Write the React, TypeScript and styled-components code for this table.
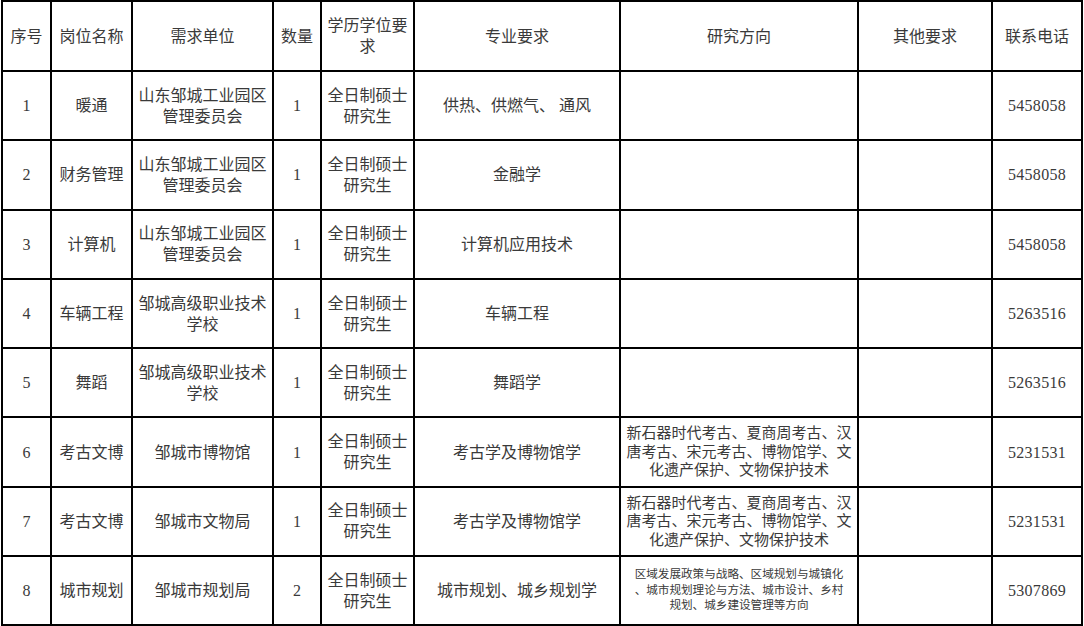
import React from 'react';
import styled, { createGlobalStyle } from 'styled-components';

interface Post {
  no: number;
  title: string;
  unit: string;
  count: number;
  degree: string;
  major: string;
  research: string[];
  researchSmall?: boolean;
  other: string;
  phone: string;
}

const GlobalStyle = createGlobalStyle`
  html, body {
    margin: 0;
    padding: 0;
    background: #ffffff;
  }
  body {
    font-family: 'Liberation Serif', 'Noto Sans CJK SC', serif;
  }
`;

const columns = [49, 81, 141, 48, 93, 206, 238, 134, 90];
const headers = ['序号', '岗位名称', '需求单位', '数量', '学历学位要求', '专业要求', '研究方向', '其他要求', '联系电话'];

const degree = '全日制硕士研究生';
const archaeology = ['新石器时代考古、夏商周考古、汉', '唐考古、宋元考古、博物馆学、文', '化遗产保护、文物保护技术'];

const posts: Post[] = [
  { no: 1, title: '暖通', unit: '山东邹城工业园区管理委员会', count: 1, degree, major: '供热、供燃气、 通风', research: [], other: '', phone: '5458058' },
  { no: 2, title: '财务管理', unit: '山东邹城工业园区管理委员会', count: 1, degree, major: '金融学', research: [], other: '', phone: '5458058' },
  { no: 3, title: '计算机', unit: '山东邹城工业园区管理委员会', count: 1, degree, major: '计算机应用技术', research: [], other: '', phone: '5458058' },
  { no: 4, title: '车辆工程', unit: '邹城高级职业技术学校', count: 1, degree, major: '车辆工程', research: [], other: '', phone: '5263516' },
  { no: 5, title: '舞蹈', unit: '邹城高级职业技术学校', count: 1, degree, major: '舞蹈学', research: [], other: '', phone: '5263516' },
  { no: 6, title: '考古文博', unit: '邹城市博物馆', count: 1, degree, major: '考古学及博物馆学', research: archaeology, other: '', phone: '5231531' },
  { no: 7, title: '考古文博', unit: '邹城市文物局', count: 1, degree, major: '考古学及博物馆学', research: archaeology, other: '', phone: '5231531' },
  {
    no: 8,
    title: '城市规划',
    unit: '邹城市规划局',
    count: 2,
    degree,
    major: '城市规划、城乡规划学',
    research: ['区域发展政策与战略、区域规划与城镇化', '、城市规划理论与方法、城市设计、乡村', '规划、城乡建设管理等方向'],
    researchSmall: true,
    other: '',
    phone: '5307869',
  },
];

const Page = styled.div`
  padding: 0 0 0 1px;
`;

const Table = styled.table`
  width: 1082px;
  table-layout: fixed;
  border-collapse: collapse;
  color: #3a3a3a;
  font-size: 16px;
`;

const HeadRow = styled.tr`
  height: 70px;
`;

const Row = styled.tr`
  height: 69.3px;
`;

const Cell = styled.td`
  border: 2px solid #000;
  padding: 0 2px;
  text-align: center;
  vertical-align: middle;
  line-height: 21px;
  font-weight: 400;
  word-break: break-all;
`;

const Research = styled.div<{ $small?: boolean }>`
  font-size: ${({ $small }) => ($small ? '11.6px' : '15px')};
  line-height: ${({ $small }) => ($small ? '15.5px' : '18.5px')};
  white-space: nowrap;
`;

const Line = styled.span`
  display: block;
`;

const Phone = styled.span`
  letter-spacing: 0.3px;
`;

export default function App() {
  return (
    <>
      <GlobalStyle />
      <Page>
        <Table>
          <colgroup>
            {columns.map((w, i) => (
              <col key={i} style={{ width: w }} />
            ))}
          </colgroup>
          <thead>
            <HeadRow>
              {headers.map((h) => (
                <Cell as="th" key={h}>
                  {h}
                </Cell>
              ))}
            </HeadRow>
          </thead>
          <tbody>
            {posts.map((p) => (
              <Row key={p.no}>
                <Cell>{p.no}</Cell>
                <Cell>{p.title}</Cell>
                <Cell>{p.unit}</Cell>
                <Cell>{p.count}</Cell>
                <Cell>{p.degree}</Cell>
                <Cell>{p.major}</Cell>
                <Cell>
                  <Research $small={p.researchSmall}>
                    {p.research.map((l) => (
                      <Line key={l}>{l}</Line>
                    ))}
                  </Research>
                </Cell>
                <Cell>{p.other}</Cell>
                <Cell>
                  <Phone>{p.phone}</Phone>
                </Cell>
              </Row>
            ))}
          </tbody>
        </Table>
      </Page>
    </>
  );
}
